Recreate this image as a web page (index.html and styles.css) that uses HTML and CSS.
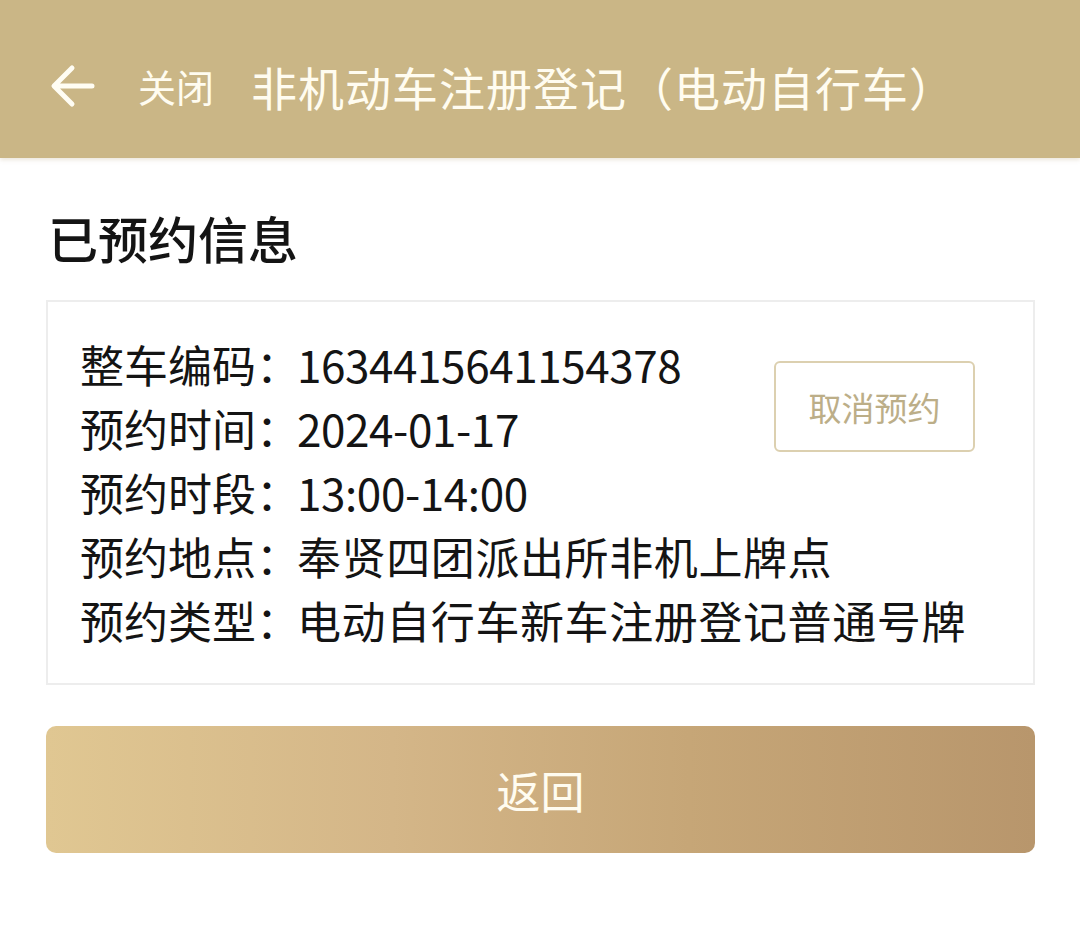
FILE: index.html
```html
<!DOCTYPE html>
<html lang="zh-CN">
<head>
<meta charset="utf-8">
<title>非机动车注册登记（电动自行车）</title>
<link rel="stylesheet" href="styles.css">
</head>
<body>
<header class="topbar">
  <svg class="back" width="46" height="46" viewBox="0 0 46 46" aria-hidden="true">
    <path d="M42 23 H5 M22 5 L4 23 L22 41" fill="none" stroke="#fffdf3" stroke-width="5" stroke-linecap="round" stroke-linejoin="round"/>
  </svg>
  <span class="close">关闭</span>
  <span class="title">非机动车注册登记（电动自行车）</span>
</header>
<main class="content">
  <h1 class="heading">已预约信息</h1>
  <section class="card">
    <div class="info">
      <div class="row"><span class="label">整车编码：</span><span class="value num">1634415641154378</span></div>
      <div class="row"><span class="label">预约时间：</span><span class="value num">2024-01-17</span></div>
      <div class="row"><span class="label">预约时段：</span><span class="value num">13:00-14:00</span></div>
      <div class="row"><span class="label">预约地点：</span><span class="value cjk">奉贤四团派出所非机上牌点</span></div>
      <div class="row"><span class="label">预约类型：</span><span class="value cjk">电动自行车新车注册登记普通号牌</span></div>
    </div>
    <button class="cancel" type="button">取消预约</button>
  </section>
  <button class="return" type="button">返回</button>
</main>
</body>
</html>
```

FILE: styles.css
```css
* { box-sizing: border-box; }
html, body {
  margin: 0;
  padding: 0;
  background: #ffffff;
}
body {
  width: 1080px;
  height: 936px;
  font-family: "Noto Sans CJK SC", "Noto Sans", sans-serif;
  color: #141414;
  overflow: hidden;
}
.topbar {
  height: 158px;
  background: #cab686;
  display: flex;
  align-items: center;
  padding: 14px 0 0 50px;
  color: #fffcf0;
  box-shadow: 0 2px 4px rgba(180, 160, 120, 0.25);
}
.back {
  display: block;
}
.close {
  font-size: 38px;
  margin-left: 42px;
  line-height: 1;
}
.title {
  font-size: 46px;
  margin-left: 37px;
  line-height: 1;
  letter-spacing: 1px;
}
.content {
  padding: 0 45px 0 46px;
}
.heading {
  margin: 48px 0 0 2px;
  font-size: 50px;
  font-weight: 500;
  line-height: 62px;
  color: #141414;
}
.card {
  margin-top: 32px;
  border: 2px solid #ededed;
  display: flex;
  align-items: flex-start;
  padding: 30px 58px 31px 32px;
}
.info {
  flex: 1 1 0;
  min-width: 0;
}
.row {
  display: flex;
  font-size: 44px;
  line-height: 64px;
  white-space: nowrap;
}
.label {
  width: 217px;
  flex: none;
}
.num {
  letter-spacing: -0.4px;
}
.cjk {
  letter-spacing: 0.6px;
}
.cancel {
  margin-top: 29px;
  width: 201px;
  height: 91px;
  border: 2px solid #dcd0b0;
  border-radius: 6px;
  background: #ffffff;
  color: #bcae88;
  font-family: "Noto Sans CJK SC", "Noto Sans", sans-serif;
  font-size: 33px;
  padding: 0;
  flex: none;
}
.return {
  display: block;
  margin-top: 41px;
  width: 989px;
  height: 127px;
  border: none;
  border-radius: 10px;
  background: linear-gradient(90deg, #e0c792 0%, #d4b688 35%, #c6a677 65%, #b8966c 100%);
  color: #fffcf0;
  font-family: "Noto Sans CJK SC", "Noto Sans", sans-serif;
  font-size: 44px;
  padding: 0;
}
```
